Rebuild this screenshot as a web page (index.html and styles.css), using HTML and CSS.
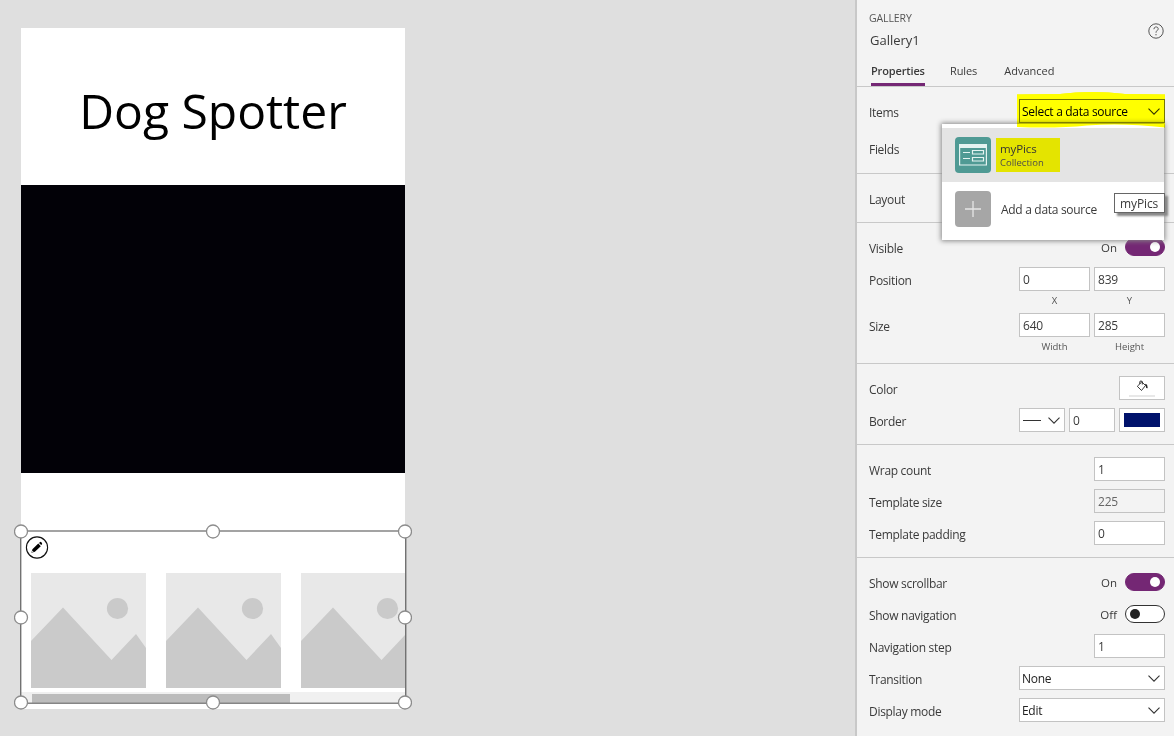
FILE: index.html
```html
<!DOCTYPE html>
<html lang="en">
<head>
<meta charset="utf-8">
<title>Gallery1</title>
<link rel="stylesheet" href="styles.css">
</head>
<body>
<svg class="defs" width="0" height="0">
  <symbol id="chev" viewBox="0 0 12 7"><path d="M.5 .7 6 6.2 11.5 .7" fill="none" stroke="#333" stroke-width="1.1"/></symbol>
  <symbol id="highlight" viewBox="0 0 149 40"><path fill="#ff0" d="M0 3.500 43 3 Q75-1 108 3L148 3.500V36.500Q105 31.500 70 34.500 40 37.500 0 36z"/></symbol>
  <symbol id="photo" viewBox="0 0 115 115"><path fill="#e8e8e8" d="M0 0h115v115H0z"/><circle cx="86.5" cy="35.5" r="10.6" fill="#cacaca"/><path fill="#cacaca" d="M0 68 32 34.500 80.500 87 105 61 115 75V115H0z"/></symbol>
</svg>
<div class="app">
  <main class="canvas">
    <div class="screen">
      <h1 class="title">Dog Spotter</h1>
      <div class="camera"></div>
      <div class="gallery">
        <div class="cards">
          <svg class="card"><use href="#photo"/></svg>
          <svg class="card"><use href="#photo"/></svg>
          <svg class="card"><use href="#photo"/></svg>
        </div>
        <div class="scroll"><div class="thumb"></div></div>
        <svg class="selection" viewBox="0 0 398 186" width="398" height="186">
          <path d="M6.500 7v172M391.500 7v172" transform="translate(.3 0)" stroke="#444" fill="none"/>
          <path d="M7 7h384M7 179.300h384" stroke="#858585" stroke-width="1.500" fill="none"/>
          <g fill="#fff" stroke="#8c8c8c" stroke-width="1.300"><circle cx="7" cy="7.500" r="6.500"/><circle cx="199" cy="7.500" r="6.500"/><circle cx="391" cy="7.500" r="6.500"/><circle cx="7" cy="93.500" r="6.500"/><circle cx="391" cy="93.500" r="6.500"/><circle cx="7" cy="178.500" r="6.500"/><circle cx="199" cy="178.500" r="6.500"/><circle cx="391" cy="178.500" r="6.500"/></g>
          <circle cx="23" cy="23.500" r="10.600" fill="#fff" stroke="#111" stroke-width="1.100"/>
          <path d="M17.400 28.700l1-3.500 5.900-5.600 2.500 2.600-5.900 5.600zM25 18.900l1.400-1.200q1.700.4 1.800 2.200l-1 1.200z"/><path d="M18 28.300l.4-1.700 1.200 1.200z" fill="#fff"/>
        </svg>
      </div>
    </div>
  </main>
  <aside class="panel">
    <header class="head">
      <div class="names"><div class="kind">GALLERY</div><div class="name">Gallery1</div></div>
      <svg class="help" width="16" height="16" viewBox="0 0 16 16" fill="none" stroke="#555"><circle cx="8" cy="8" r="7.200"/><path d="M5.900 6.200C5.900 3.200 10.200 3.300 10.200 5.800 10.200 7.500 8 7.500 8 9.700M8 11v1.300"/></svg>
      <nav class="tabs"><span class="tab active">Properties</span><span class="tab rules">Rules</span><span class="tab">Advanced</span></nav>
    </header>
    <svg class="marker" width="149" height="40"><use href="#highlight"/></svg>
    <section class="section first">
      <div class="row items"><span class="label">Items</span><div class="select clear"><span>Select a data source</span><svg class="chev"><use href="#chev"/></svg></div></div>
      <div class="row"><span class="label">Fields</span></div>
    </section>
    <section class="section"><div class="row"><span class="label">Layout</span></div></section>
    <section class="section">
      <div class="row"><span class="label">Visible</span><span class="state">On</span><span class="toggle on"></span></div>
      <div class="row tall"><span class="label">Position</span><div class="field"><div class="input">0</div><small>X</small></div><div class="field"><div class="input">839</div><small>Y</small></div></div>
      <div class="row tall"><span class="label">Size</span><div class="field"><div class="input">640</div><small>Width</small></div><div class="field"><div class="input">285</div><small>Height</small></div></div>
    </section>
    <section class="section">
      <div class="row"><span class="label">Color</span><div class="input small swatch"><svg width="12" height="12" viewBox="0 0 12 12" fill="none" stroke="#222" stroke-width=".9"><path d="M5.800 1.900 9.500 5.500 5.500 10.500 1.300 6.300zM3.800 4V2Q3.800.8 5 1l1.300.5V4.500"/><path d="M9.200 4.500Q11.200 4.900 10.800 8.200" stroke-width="1.500"/></svg><i class="fill"></i></div></div>
      <div class="row"><span class="label">Border</span><div class="input small line"><i></i><svg class="chev"><use href="#chev"/></svg></div><div class="input small">0</div><div class="input small swatch"><i class="navy"></i></div></div>
    </section>
    <section class="section">
      <div class="row"><span class="label">Wrap count</span><div class="input">1</div></div>
      <div class="row"><span class="label">Template size</span><div class="input disabled">225</div></div>
      <div class="row"><span class="label">Template padding</span><div class="input">0</div></div>
    </section>
    <section class="section last">
      <div class="row"><span class="label">Show scrollbar</span><span class="state">On</span><span class="toggle on"></span></div>
      <div class="row"><span class="label">Show navigation</span><span class="state">Off</span><span class="toggle"></span></div>
      <div class="row"><span class="label">Navigation step</span><div class="input">1</div></div>
      <div class="row"><span class="label">Transition</span><div class="select"><span>None</span><svg class="chev"><use href="#chev"/></svg></div></div>
      <div class="row"><span class="label">Display mode</span><div class="select"><span>Edit</span><svg class="chev"><use href="#chev"/></svg></div></div>
    </section>
    <div class="menu">
      <div class="option hover">
        <svg width="36" height="36" viewBox="0 0 36 36"><rect width="36" height="36" rx="4" fill="#4f9a94"/><g fill="none" stroke="#e4f3f1" stroke-width="1.200"><path d="M4.600 8h26.800v20H4.600zM8 15.500h7M8 21.500h7"/><path d="M17.500 13.500h11v3.500h-11zM17.500 20.500h11v3.500h-11z"/></g><path fill="#e4f3f1" d="M4 7h28v4H4z"/></svg>
        <div class="source"><div class="sname">myPics</div><div class="stype">Collection</div></div>
      </div>
      <div class="option add">
        <svg width="36" height="36" viewBox="0 0 36 36"><rect width="36" height="36" rx="4" fill="#a6a6a6"/><path d="M10 18h16M18 10v16" stroke="#e6e6e6" stroke-width="1.300"/></svg>
        <span>Add a data source</span>
      </div>
    </div>
    <svg class="marker overlay" width="149" height="40"><use href="#highlight"/></svg>
    <div class="tip">myPics</div>
  </aside>
</div>
</body>
</html>
```
FILE: styles.css
```css
* { box-sizing: border-box; }
body { margin: 0; overflow: hidden; font-family: "Open Sans", "Noto Sans", sans-serif; font-size: 12px; color: #3a3a3a; }
.defs { position: absolute; }
.app { display: flex; width: 1174px; height: 736px; background: #dfdfdf; }
.canvas { flex: 1; padding: 28px 0 0 21px; }
.screen { width: 384px; height: 681px; background: #fff; }
.title { margin: 0; height: 157px; padding-top: 50px; font-size: 48px; font-weight: 400; line-height: 66px; text-align: center; color: #000; white-space: nowrap; }
.camera { height: 288px; background: #020107; }
.gallery { position: relative; height: 172px; margin-top: 58px; padding-top: 42px; }
.cards { display: flex; gap: 20px; padding-left: 10px; overflow: hidden; }
.card { width: 115px; height: 115px; flex: none; }
.scroll { height: 11px; margin-top: 4px; padding: 2px 0 0 11px; background: #f0f0f0; }
.thumb { width: 258px; height: 9px; background: #bcbcbc; }
.selection { position: absolute; left: -7px; top: -7px; }
.panel { position: relative; width: 319px; border-left: 2px solid #c8c8c8; background: #f3f3f3; }
.head { display: grid; grid-template-columns: 1fr 16px; grid-template-rows: 53px 24px; height: 87px; padding: 9px 10px 0 12px; border-bottom: 1px solid #c8c8c8; }
.kind { font-size: 10.500px; line-height: 18px; color: #555; letter-spacing: -.1px; }
.name { font-size: 13px; line-height: 26px; padding-left: 1px; }
.help { margin-top: 14px; }
.tabs { grid-column: 1 / 3; display: flex; padding-left: 2px; font-size: 11px; }
.tab { height: 24px; line-height: 18px; }
.active { width: 54px; font-weight: 600; letter-spacing: -.15px; border-bottom: 3px solid #742774; white-space: nowrap; }
.rules { margin: 0 27px 0 25px; letter-spacing: -.1px; }
.section { padding: 8px 9px 8px 12px; border-bottom: 1px solid #c8c8c8; }
.first { height: 87px; }
.last { border: 0; }
.items { margin-bottom: 5px; }
.row { display: flex; align-items: center; gap: 4px; height: 32px; }
.tall { height: 46px; align-items: flex-start; padding-top: 4px; }
.label { margin-right: auto; padding-top: 3px; line-height: 18px; letter-spacing: -.3px; white-space: nowrap; }
.tall .label { padding-top: 5px; }
.input, .select { display: flex; align-items: center; height: 24px; padding: 1px 3px 0; border: 1px solid #c3c3c3; background: #fff; line-height: 18px; }
.input { width: 71px; letter-spacing: -.2px; }
.select { width: 146px; justify-content: space-between; padding-left: 2px; padding-right: 4px; color: #222; letter-spacing: -.3px; }
.clear { position: relative; background: transparent; color: #000; border-color: #77770a; }
.chev { width: 12px; height: 7px; }
.disabled { background: #f3f3f3; color: #666; }
.field { text-align: center; }
.field small { display: block; padding-top: 1px; font-size: 9.500px; line-height: 18px; color: #555; }
.small { width: 46px; }
.swatch { flex-direction: column; justify-content: center; padding-top: 0; }
.fill { width: 26px; height: 2px; margin-top: 3px; background: #e8e8e8; }
.navy { width: 36px; height: 14px; background: #00126b; }
.line { justify-content: space-between; padding-right: 4px; }
.line i { width: 18px; height: 1px; background: #333; }
.state { margin-right: 4px; font-size: 11.500px; }
.toggle { width: 40px; height: 18px; padding: 3px 4px; border: 1px solid #333; border-radius: 9px; background: #fff; }
.toggle::before { content: ""; display: block; width: 10px; height: 10px; border-radius: 50%; background: #222; }
.toggle.on { background: #742774; border-color: #742774; }
.on::before { margin-left: auto; background: #fff; }
.menu { position: absolute; left: 85px; top: 124px; width: 222px; height: 116px; padding-top: 4px; background: #fff; box-shadow: 0 0 5px 1px #888; }
.option { display: flex; align-items: center; height: 54px; padding-left: 13px; }
.option svg { flex: none; }
.hover { gap: 5px; background: #e4e4e4; }
.add { gap: 10px; padding-top: 1px; letter-spacing: -.3px; }
.add svg { margin-top: -1px; }
.source { width: 64px; height: 34px; padding: 3px 0 0 4px; background: #ff0; mix-blend-mode: multiply; }
.sname { line-height: 15px; font-size: 11.500px; letter-spacing: -.1px; }
.stype { line-height: 13px; font-size: 9.500px; color: #555; }
.marker { position: absolute; left: 160px; top: 91px; }
.overlay { mix-blend-mode: multiply; }
.tip { position: absolute; left: 257px; top: 193px; width: 51px; height: 20px; padding-left: 5px; border: 1px solid #666; background: #fff; line-height: 19px; letter-spacing: -.1px; box-shadow: 3px 3px 2px #888; }
```
